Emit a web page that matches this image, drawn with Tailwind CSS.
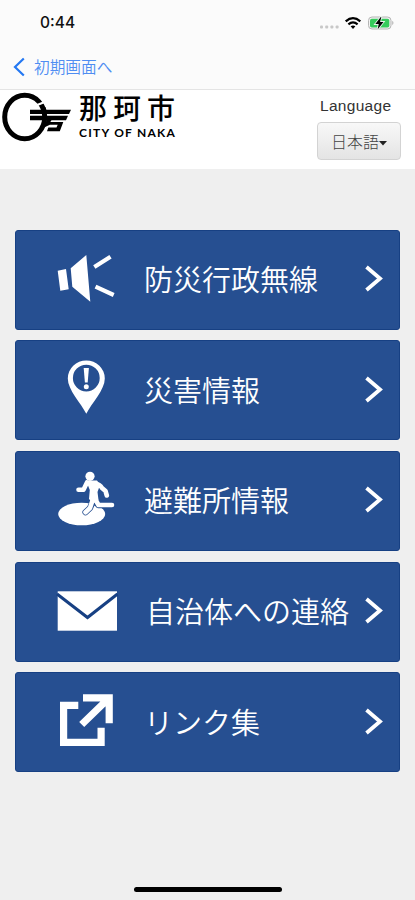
<!DOCTYPE html>
<html lang="ja">
<head>
<meta charset="utf-8">
<title>那珂市</title>
<script src="https://cdn.jsdelivr.net/npm/@tailwindcss/browser@4"></script>
</head>
<body class="bg-[#efefef] font-['Liberation_Sans','Noto_Sans_CJK_JP',sans-serif]">
<div class="w-[415px] h-[900px] flex flex-col overflow-hidden">
  <div class="h-[46px] shrink-0 bg-[#fbfbfb] flex items-center justify-between pl-10 pr-[20px]">
    <span class="font-['Inter',sans-serif] font-medium text-[15.500px] leading-none text-[#111]">0:44</span>
    <svg class="w-[78px] h-[20px]" viewBox="317 13 78 20">
      <g fill="#c8c8c8"><rect x="320" y="25.500" width="3" height="3" rx="1"/><rect x="325.2" y="25.500" width="3" height="3" rx="1"/><rect x="330.4" y="25.500" width="3" height="3" rx="1"/><rect x="335.6" y="25.500" width="3" height="3" rx="1"/></g>
      <g fill="none" stroke="#000" stroke-width="2.2"><path d="M345.7 21.3q7.3-6.3 14.6 0"/><path d="M348.4 24.3q4.6-4 9.2 0"/></g>
      <path d="M350.6 26.3q2.4-1.8 4.8 0L353 28.9Z"/>
      <rect x="368.5" y="17" width="22.5" height="12" rx="3.5" fill="#f2f2f2" stroke="#b5b5b5"/>
      <rect x="370" y="18.7" width="19.3" height="8.8" rx="1.8" fill="#35cb5b"/>
      <path d="M392.3 20.7q2.3 2 0 4.5Z" fill="#aaa"/>
      <path d="M380.8 17l-5.5 7h3.4l-1 5.2 5.8-7.3h-3.4l1.2-4.9Z" stroke="#e9f5ec" stroke-width="1.8" paint-order="stroke"/>
    </svg>
  </div>
  <div class="h-[44px] shrink-0 bg-[#fbfbfb] border-b border-[#e4e4e4] flex items-center pl-[13px]">
    <svg class="w-3 h-5 mt-[-2px]" viewBox="0 0 12 20"><path d="M10.800 1.500L2 10l8.800 8.500" fill="none" stroke="#2478f2" stroke-width="2.200"/></svg>
    <span class="ml-[9px] mt-[-2px] text-[15.700px] leading-none text-[#4f8df2] font-[350] font-['Noto_Sans_CJK_JP',sans-serif] whitespace-nowrap">初期画面へ</span>
  </div>
  <header class="h-[79px] shrink-0 bg-white flex justify-between pr-[14px]">
    <div class="flex">
      <svg class="w-[72px] h-[54px]" viewBox="0 90 72 54">
        <ellipse cx="24.700" cy="117" rx="20" ry="21.700" fill="none" stroke="#000" stroke-width="5"/>
        <path d="M36 105.500l8-3.200" stroke="#fff" stroke-width="2.200"/>
        <path d="M30 109.800h11.500l-1.500-3.500 5.500 1 .8 2.500H71l-2 4.300H30ZM30 115.800h38l-2 4.400H51.500l-1.200 1.800h13l-3.500 9.200H47l1.300-3.700h8.200l1.200-2.700H50l-5.500 2.500 2-7.100H30Z"/>
      </svg>
      <div class="pl-[7px] w-[108px] flex flex-col">
        <div class="mt-[3px] h-[29px] flex items-center gap-[6px] text-[28px] leading-[29px] font-medium font-['Noto_Sans_CJK_JP',sans-serif] whitespace-nowrap"><span>那</span><span>珂</span><span>市</span></div>
        <div class="mt-[4px] h-[14px] text-[12px] leading-[14px] font-bold tracking-[1.250px] font-['Lato',sans-serif] whitespace-nowrap">CITY OF NAKA</div>
      </div>
    </div>
    <div class="flex flex-col items-center w-[84px]">
      <div class="mt-[7px] h-[18px] leading-[18px] text-[15.500px] tracking-[0.300px] text-[#333] self-start ml-[3px] whitespace-nowrap">Language</div>
      <button class="mt-[7px] w-[84px] h-[38px] shrink-0 rounded-[4px] border border-[#d3d3d3] bg-linear-to-b from-[#f8f8f8] to-[#e4e4e4] flex items-center justify-center text-[16px] text-[#444] font-light font-['Noto_Sans_CJK_JP',sans-serif] whitespace-nowrap">日本語<svg class="w-[8px] h-[5px] mt-1" viewBox="0 0 8 5"><path d="M0 0h8L4 4.500Z" fill="#222"/></svg></button>
    </div>
  </header>
  <main class="pt-[60.600px] pl-[15px] pr-[15px] flex flex-col gap-[10.700px] text-white text-[29px] font-[350] font-['Noto_Sans_CJK_JP',sans-serif]">
    <a class="h-[100px] shrink-0 rounded-[3px] bg-[#264f91] border border-[#174083] flex items-center">
      <svg class="w-[128px] h-[98px] shrink-0" viewBox="1 1 128 98" fill="#fff"><path d="M42.700 40.700L51 39l2.700 20.300-8.400 1.400ZM55.700 38.300L71.300 25l4 46.700-18-15Z"/><path d="M79.300 37L95.500 26.700M80.500 56.700L98.700 65" stroke="#fff" stroke-width="4.200"/></svg>
      <span class="flex-1 whitespace-nowrap leading-none mt-[-2px]">防災行政無線</span>
      <svg class="w-[18px] h-[27px] mr-[16px] mt-[-2px] shrink-0" viewBox="0 0 18 27"><path d="M1.500 2L15 13.500 1.500 25" fill="none" stroke="#fff" stroke-width="3.800"/></svg>
    </a>
    <a class="h-[100px] shrink-0 rounded-[3px] bg-[#264f91] border border-[#174083] flex items-center">
      <svg class="w-[128px] h-[98px] shrink-0" viewBox="1 1 128 98" fill="#fff"><path fill-rule="evenodd" d="M71.300 73.800C66 63 52.800 50 52.800 38.500a18.500 18 0 0 1 37 0C89.800 50 76.600 63 71.300 73.800ZM71.300 24.700a13.400 13.400 0 1 0 0 26.800 13.400 13.400 0 1 0 0-26.800Z"/><path d="M68.700 28h5.200L72.700 42.500H69.900Z"/><circle cx="71.300" cy="46.700" r="2.500"/></svg>
      <span class="flex-1 whitespace-nowrap leading-none mt-[-2px]">災害情報</span>
      <svg class="w-[18px] h-[27px] mr-[16px] mt-[-2px] shrink-0" viewBox="0 0 18 27"><path d="M1.500 2L15 13.500 1.500 25" fill="none" stroke="#fff" stroke-width="3.800"/></svg>
    </a>
    <a class="h-[100px] shrink-0 rounded-[3px] bg-[#264f91] border border-[#174083] flex items-center">
      <svg class="w-[128px] h-[98px] shrink-0" viewBox="1 1 128 98" fill="#fff"><ellipse cx="66.700" cy="63" rx="23.500" ry="11.300"/>
        <path d="M78 50L75 57 70.500 61.200M80 50l3.500 4.200H97" fill="none" stroke="#264f91" stroke-width="6.200" stroke-linecap="round" stroke-linejoin="round"/>
        <circle cx="75" cy="25.300" r="4.600"/>
        <path d="M72 31.500L68.500 38.700H63.500M79 32.500q6 .5 8 4.500l3.500 3 1.300 4.500M78 48L75 57 70.500 61.200M79 46L83.500 54H97" fill="none" stroke="#fff" stroke-width="4.600" stroke-linecap="round" stroke-linejoin="round"/>
        <path d="M71 29.500H82l3 4.500L82.500 41l1 8-5.500 3-4-4 .8-9Z"/></svg>
      <span class="flex-1 whitespace-nowrap leading-none mt-[-2px]">避難所情報</span>
      <svg class="w-[18px] h-[27px] mr-[16px] mt-[-2px] shrink-0" viewBox="0 0 18 27"><path d="M1.500 2L15 13.500 1.500 25" fill="none" stroke="#fff" stroke-width="3.800"/></svg>
    </a>
    <a class="h-[100px] shrink-0 rounded-[3px] bg-[#264f91] border border-[#174083] flex items-center">
      <svg class="w-[130px] h-[98px] shrink-0" viewBox="1 1 130 98" fill="#fff"><rect x="42.700" y="29.300" width="59.300" height="39.400"/><path d="M42 32L72.500 55.500 102.500 32" fill="none" stroke="#174083" stroke-width="3"/></svg>
      <span class="flex-1 whitespace-nowrap leading-none mt-[-2px]">自治体への連絡</span>
      <svg class="w-[18px] h-[27px] mr-[16px] mt-[-2px] shrink-0" viewBox="0 0 18 27"><path d="M1.500 2L15 13.500 1.500 25" fill="none" stroke="#fff" stroke-width="3.800"/></svg>
    </a>
    <a class="h-[100px] shrink-0 rounded-[3px] bg-[#264f91] border border-[#174083] flex items-center">
      <svg class="w-[128px] h-[98px] shrink-0" viewBox="1 1 128 98" fill="none" stroke="#fff" stroke-width="7.200"><path d="M63.300 33.300H48.600V70.400H86.100V55.700"/><path d="M68 25.800H94.200V51.300M66.700 52.500L93 27"/></svg>
      <span class="flex-1 whitespace-nowrap leading-none mt-[-2px]">リンク集</span>
      <svg class="w-[18px] h-[27px] mr-[16px] mt-[-2px] shrink-0" viewBox="0 0 18 27"><path d="M1.500 2L15 13.500 1.500 25" fill="none" stroke="#fff" stroke-width="3.800"/></svg>
    </a>
  </main>
  <div class="mt-auto mb-[8px] ml-[134px] w-[148px] h-[5px] shrink-0 rounded-full bg-black"></div>
</div>
</body>
</html>
